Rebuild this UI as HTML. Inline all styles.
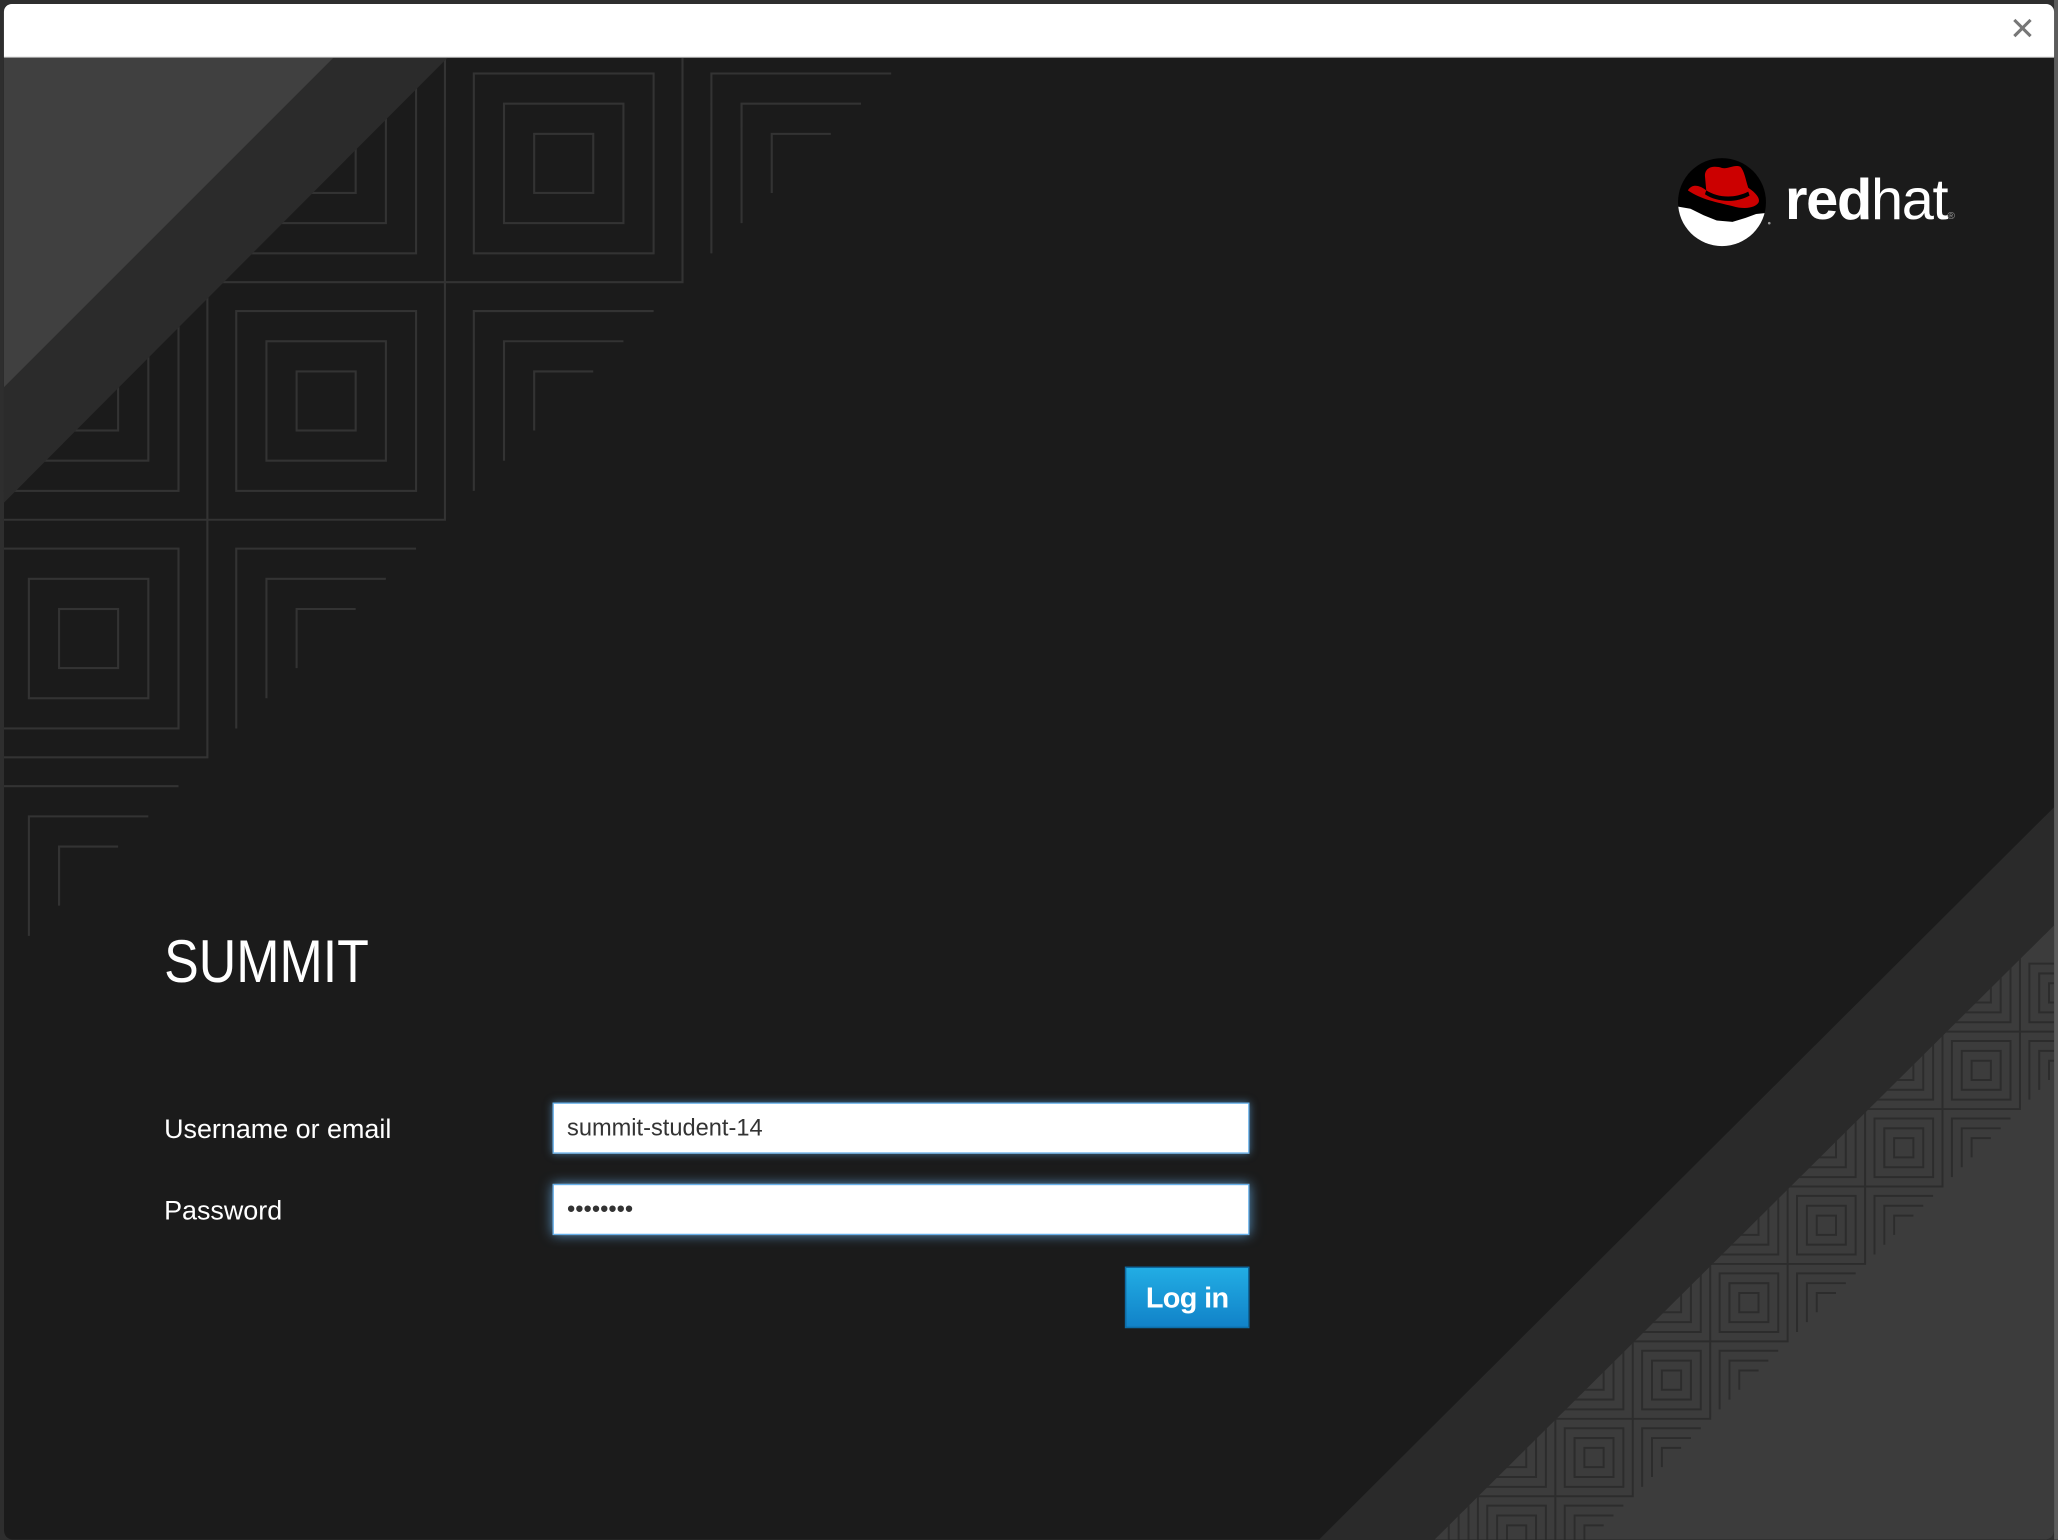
<!DOCTYPE html>
<html><head><meta charset="utf-8"><style>
html,body{margin:0;padding:0;}
body{width:2058px;height:1540px;overflow:hidden;background:#2e2e2e;font-family:"Liberation Sans",sans-serif;}
#w{position:absolute;left:0;top:0;width:1568px;height:1173px;transform:scale(1.3125);transform-origin:0 0;background:#2e2e2e;}
#rs{position:absolute;left:1565px;top:0;width:3px;height:1173px;background:#5c5c5c;}
#hd{position:absolute;left:3px;top:3px;width:1562px;height:40px;background:#fff;border-radius:6px 6px 0 0;border-bottom:1px solid #dcdcdc;}
#x{position:absolute;right:14px;top:6px;font-size:24px;color:#777;line-height:28px;}
#bg{position:absolute;left:0;top:0;}
.t{position:absolute;color:#fff;white-space:nowrap;}
#summit{left:125px;top:704px;font-size:46px;line-height:56px;transform:scaleX(0.86);transform-origin:0 0;}
.lbl{left:125px;font-size:20.5px;line-height:24px;}
.inp{position:absolute;left:421px;background:#fff;border:1px solid #66afe9;box-shadow:0 0 6px rgba(102,175,233,.6);font-size:18px;color:#333;line-height:37px;padding-left:10px;box-sizing:border-box;width:531px;height:39px;}
#btn{position:absolute;left:857px;top:965px;width:95px;height:47px;box-sizing:border-box;background:linear-gradient(#22ade4,#1182c8);border:1px solid #0c6ea9;color:#fff;font-size:22px;font-weight:600;text-align:center;line-height:45px;letter-spacing:-0.5px;}
#rh{position:absolute;left:1360px;top:128px;font-size:44px;line-height:50px;color:#fff;letter-spacing:-1px;}
</style></head><body><div id="w">
<div id="rs"></div>
<svg id="bg" width="1568" height="1173" viewBox="0 0 1568 1173">
<defs>
<clipPath id="pc"><path d="M3,44H1565V1165Q1565,1173 1557,1173H11Q3,1173 3,1165Z"/></clipPath>
<g id="full" fill="none">
<rect x="22" y="22" width="137" height="137"/><rect x="45" y="45" width="91" height="91"/><rect x="68" y="68" width="45" height="45"/>
<path d="M181,0V181H0"/></g>
<g id="gam" fill="none"><path d="M22,159V22H159M45,136V45H136M68,113V68H113"/></g>
<clipPath id="lc"><path d="M1565,705L1093,1173H1565Z"/></clipPath>
<clipPath id="cc"><circle cx="0" cy="0" r="33.5"/></clipPath>
</defs>
<g clip-path="url(#pc)">
<rect x="3" y="44" width="1562" height="1129" fill="#1b1b1b"/>
<g stroke="#333" stroke-width="1.6">
<use href="#full" x="339" y="34"/><use href="#full" x="158" y="34"/><use href="#full" x="-23" y="34"/>
<use href="#full" x="158" y="215"/><use href="#full" x="-23" y="215"/><use href="#full" x="-23" y="396"/>
<use href="#gam" x="520" y="34"/><use href="#gam" x="339" y="215"/><use href="#gam" x="158" y="396"/><use href="#gam" x="-23" y="577"/>
</g>
<path d="M3,44H341L3,383Z" fill="#2b2b2b"/>
<path d="M3,44H254L3,295Z" fill="#404040"/>
<path d="M1565,615V1173H1005Z" fill="#2a2a2a"/>
<path d="M1565,705V1173H1093Z" fill="#3c3c3c"/>
<g clip-path="url(#lc)" stroke="#2c2c2c" stroke-width="4.6">
<g transform="translate(1362,904) scale(0.326)"><use href="#full" x="0" y="0"/><use href="#full" x="-181" y="0"/><use href="#full" x="-362" y="0"/><use href="#gam" x="181" y="0"/></g>
<g transform="translate(1421,845) scale(0.326)"><use href="#full" x="0" y="0"/><use href="#full" x="-181" y="0"/><use href="#full" x="-362" y="0"/><use href="#gam" x="181" y="0"/></g>
<g transform="translate(1480,786) scale(0.326)"><use href="#full" x="0" y="0"/><use href="#full" x="-181" y="0"/><use href="#full" x="-362" y="0"/><use href="#gam" x="181" y="0"/></g>
<g transform="translate(1539,727) scale(0.326)"><use href="#full" x="0" y="0"/><use href="#full" x="-181" y="0"/><use href="#full" x="-362" y="0"/><use href="#gam" x="181" y="0"/></g>
<g transform="translate(1303,963) scale(0.326)"><use href="#full" x="0" y="0"/><use href="#full" x="-181" y="0"/><use href="#full" x="-362" y="0"/><use href="#gam" x="181" y="0"/></g>
<g transform="translate(1244,1022) scale(0.326)"><use href="#full" x="0" y="0"/><use href="#full" x="-181" y="0"/><use href="#full" x="-362" y="0"/><use href="#gam" x="181" y="0"/></g>
<g transform="translate(1185,1081) scale(0.326)"><use href="#full" x="0" y="0"/><use href="#full" x="-181" y="0"/><use href="#full" x="-362" y="0"/><use href="#gam" x="181" y="0"/></g>
<g transform="translate(1126,1140) scale(0.326)"><use href="#full" x="0" y="0"/><use href="#full" x="-181" y="0"/><use href="#full" x="-362" y="0"/><use href="#gam" x="181" y="0"/></g>
</g>
</g>
<g transform="translate(1312,154)">
<circle r="33.5" fill="#000"/>
<g clip-path="url(#cc)">
<path d="M-36,3 L-24,5 L-14,10 L-4,14 L8,15 L18,12 L26,9 L36,8 V40 H-36Z" fill="#fff"/>
</g>
<path d="M-26,-9 C-22,-15 -16,-12 -12,-9 L-13,-20 C-13,-27 -6,-28 0,-26 C5,-25 9,-29 14,-27 C17,-24 18,-17 20,-11 C26,-7 29,-3 28,0 C26,4 18,6 8,3 C-4,0 -16,-2 -26,-9Z" fill="#cc0000"/>
<path d="M-12,-9 C-4,-4 8,-2 20,-8 L21,-5 C10,1 -4,0 -13,-6Z" fill="#000"/>
<circle cx="36" cy="16" r="1" fill="#999"/>
</g>
</svg>
<div id="hd"><div id="x">✕</div></div>
<div id="rh"><b>red</b>hat<span style="font-size:8px;color:#999">®</span></div>
<div class="t" id="summit">SUMMIT</div>
<div class="t lbl" style="top:849px">Username or email</div>
<div class="t lbl" style="top:911px">Password</div>
<div class="inp" style="top:840px">summit-student-14</div>
<div class="inp" style="top:902px;box-shadow:0 0 9px rgba(102,175,233,.8);font-size:18px;letter-spacing:0;">••••••••</div>
<div id="btn">Log in</div>
</div></body></html>
